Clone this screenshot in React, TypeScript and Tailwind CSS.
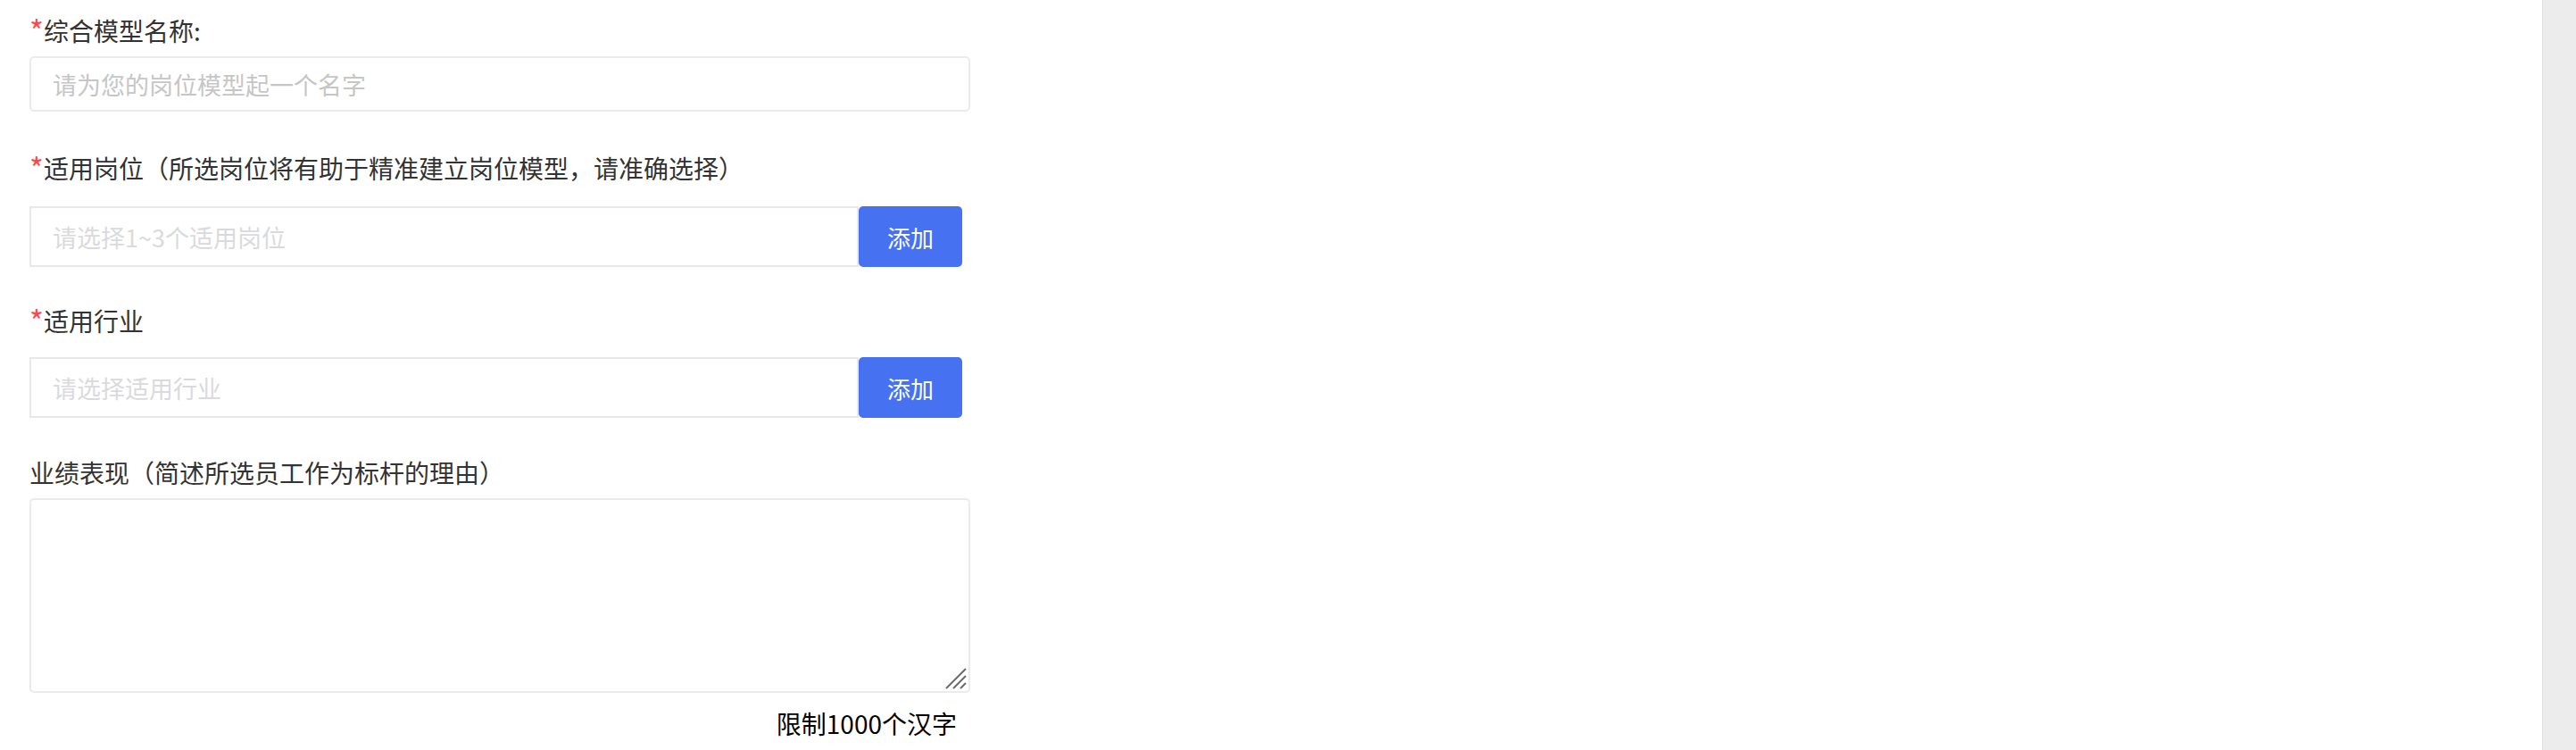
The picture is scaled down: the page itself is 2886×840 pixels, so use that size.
import { useState } from "react";

const font = { fontFamily: '"Noto Sans CJK SC", "Noto Sans", sans-serif' };

function Label({ text, required }: { text: string; required?: boolean }) {
  return (
    <div className="h-[40px] leading-[40px] text-[28px] text-[#333333] whitespace-nowrap">
      {required && <span className="text-[#fa4a4f] text-[34px] align-top leading-[40px]">*</span>}
      {text}
    </div>
  );
}

function ResizeGrip() {
  return (
    <svg className="absolute right-[3px] bottom-[3px] pointer-events-none" width="26" height="26" viewBox="0 0 26 26">
      <path d="M2 24 L24 2 M10 24 L24 10 M18 24 L24 18" stroke="#6b6b6b" strokeWidth="2" fill="none" />
    </svg>
  );
}

export default function App() {
  const [name, setName] = useState("");
  const [post, setPost] = useState("");
  const [industry, setIndustry] = useState("");
  const [perf, setPerf] = useState("");

  return (
    <div className="flex w-[2886px] h-[840px] bg-white overflow-hidden" style={font}>
      <div className="flex-1 pl-[33px] pt-[14px]">
        <div className="flex flex-col w-[1054px]">
          {/* 模型名称 */}
          <Label text="综合模型名称:" required />
          <input
            value={name}
            onChange={(e) => setName(e.target.value)}
            placeholder="请为您的岗位模型起一个名字"
            className="mt-[9px] h-[62px] w-full border-2 border-[#ebebeb] rounded-[5px] px-[24px] text-[27px] outline-none placeholder-[#c6c6c6]"
          />

          {/* 适用岗位 */}
          <div className="mt-[43px]">
            <Label text="适用岗位（所选岗位将有助于精准建立岗位模型，请准确选择）" required />
          </div>
          <div className="mt-[23px] flex h-[68px]">
            <input
              value={post}
              onChange={(e) => setPost(e.target.value)}
              placeholder="请选择1~3个适用岗位"
              className="w-[929px] h-full border-2 border-[#e8e8e8] px-[24px] text-[27px] outline-none placeholder-[#dadadd]"
            />
            <button className="w-[116px] h-full bg-[#4672f1] rounded-[5px] text-white text-[26px] cursor-pointer">
              添加
            </button>
          </div>

          {/* 适用行业 */}
          <div className="mt-[40px]">
            <Label text="适用行业" required />
          </div>
          <div className="mt-[21px] flex h-[68px]">
            <input
              value={industry}
              onChange={(e) => setIndustry(e.target.value)}
              placeholder="请选择适用行业"
              className="w-[929px] h-full border-2 border-[#e8e8e8] px-[24px] text-[27px] outline-none placeholder-[#dadadd]"
            />
            <button className="w-[116px] h-full bg-[#4672f1] rounded-[5px] text-white text-[26px] cursor-pointer">
              添加
            </button>
          </div>

          {/* 业绩表现 */}
          <div className="mt-[41px]">
            <Label text="业绩表现（简述所选员工作为标杆的理由）" />
          </div>
          <div className="relative mt-[9px] h-[218px]">
            <textarea
              value={perf}
              onChange={(e) => setPerf(e.target.value)}
              className="w-full h-full border-2 border-[#ebebeb] rounded-[5px] px-[24px] py-[12px] text-[27px] outline-none resize-none"
            />
            <ResizeGrip />
          </div>
          <div className="mt-[14px] h-[40px] leading-[40px] text-right pr-[15px] text-[28px] text-black">
            限制1000个汉字
          </div>
        </div>
      </div>
      <div className="w-[38px] h-full bg-[#ececec] border-l border-[#e0e0e0]" />
    </div>
  );
}
